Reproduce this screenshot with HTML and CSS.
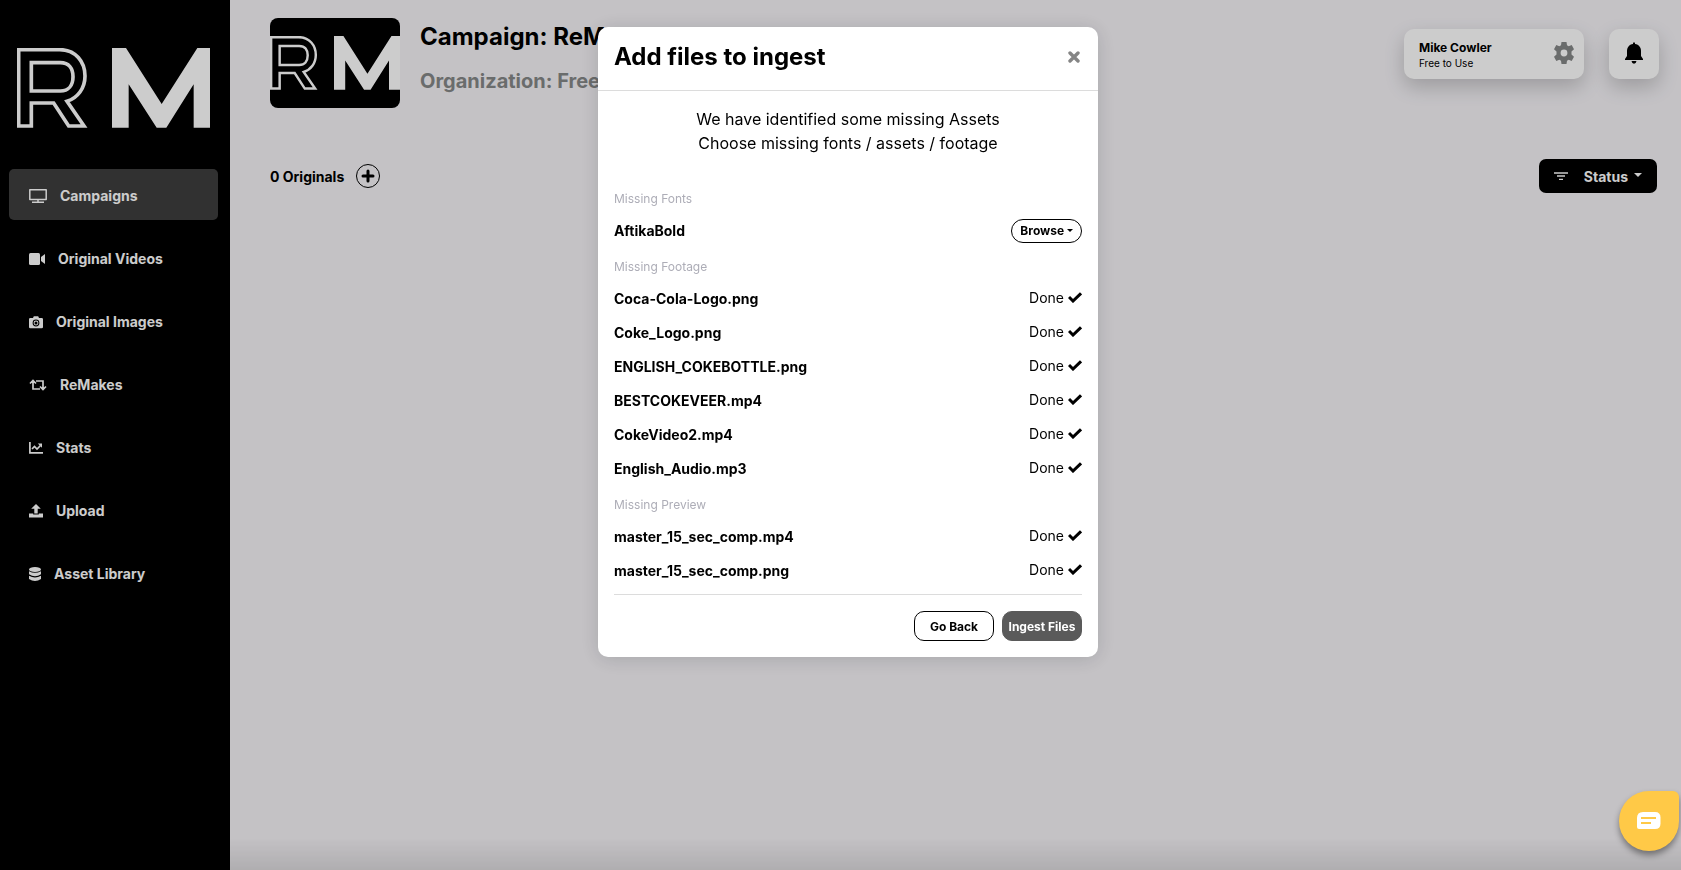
FILE: index.html
```html
<!DOCTYPE html>
<html lang="en">
<head>
  <meta charset="UTF-8">
  <title>ReMake - Campaign</title>
  <meta name="viewport" content="width=device-width, initial-scale=1.0">
  <link rel="stylesheet" href="styles.css">
</head>
<body>
  <!-- Shared icons -->
  <svg class="sprite" aria-hidden="true">
    <symbol id="logo" viewBox="0 0 579 240">
      <path fill="none" stroke="currentColor" stroke-width="11" d="M5 5H128C176 5 204 42 204 84C204 121 182 150 150 160L201 234H155L110 165H43V234H5ZM43 44H130C156 44 168 62 168 86C168 112 154 129 130 129H43Z"/>
      <path fill="currentColor" d="M285 0H327L434 168L541 0H579V239H530V109L448 239H419L335 109V239H285Z"/>
    </symbol>
    <symbol id="check" viewBox="0 0 14 11">
      <path fill="none" stroke="currentColor" stroke-width="3" d="M1 5L5 9L13 1.300"/>
    </symbol>
  </svg>

  <div class="layout">
    <!-- Sidebar -->
    <aside class="sidebar">
      <svg class="logo" role="img" aria-label="RM"><use href="#logo"/></svg>
      <nav class="menu">
        <a href="#" class="active">
          <svg width="18" height="16" viewBox="0 0 18 16"><path fill="none" stroke="currentColor" stroke-width="1.500" stroke-linejoin="round" d="M.800 1.800H17.200V11.500H.800ZM9 11.500V14M3 14.300H15"/></svg>
          Campaigns
        </a>
        <a href="#">
          <svg width="16" height="12" viewBox="0 0 16 12"><rect width="11" height="12" rx="1.500" fill="currentColor"/><path fill="currentColor" d="M12 4L16 1V11L12 8Z"/></svg>
          Original Videos
        </a>
        <a href="#">
          <svg width="14" height="14" viewBox="0 0 14 14"><path fill="currentColor" fill-rule="evenodd" d="M1.300 3H4L4.800 1.300H9.200L10 3H12.700Q14 3 14 4.300V12Q14 13.300 12.700 13.300H1.300Q0 13.300 0 12V4.300Q0 3 1.300 3ZM7 4.600A3.400 3.400 0 1 0 7 11.400A3.400 3.400 0 1 0 7 4.600Z"/><circle cx="7" cy="8" r="2.400" fill="currentColor"/><circle cx="7" cy="8" r="1.500" fill="#000"/></svg>
          Original Images
        </a>
        <a href="#">
          <svg width="18" height="12" viewBox="0 0 18 12"><path fill="none" stroke="currentColor" stroke-width="1.700" d="M4 2V10H11M1 4.500L4 1.500L7 4.500M7 2H14V10M11 7.500L14 10.500L17 7.500"/></svg>
          ReMakes
        </a>
        <a href="#">
          <svg width="14" height="12" viewBox="0 0 14 12"><path fill="none" stroke="currentColor" stroke-width="1.700" d="M.900 0V10.800H14M3 7L5.500 4.500L8 7L11.500 3.500"/><path fill="currentColor" d="M8.800 1.500H13V5.700Z"/></svg>
          Stats
        </a>
        <a href="#">
          <svg width="14" height="14" viewBox="0 0 14 14"><path fill="currentColor" d="M7 0L11.800 4.700H8.700V9.500H5.300V4.700H2.200ZM0 9.500H4.200V10.600H9.800V9.500H14V13.500H0Z"/></svg>
          Upload
        </a>
        <a href="#">
          <svg width="12" height="14" viewBox="0 0 12 14"><ellipse cx="6" cy="2.500" rx="6" ry="2.500" fill="currentColor"/><path fill="currentColor" d="M0 4.200Q6 7.500 12 4.200V7.300Q6 11 0 7.300ZM0 8.800Q6 12.200 12 8.800V12Q9 14 6 14T0 12Z"/></svg>
          Asset Library
        </a>
      </nav>
    </aside>

    <!-- Campaign page -->
    <main class="content">
      <header class="page-header">
        <div class="thumb"><svg aria-hidden="true"><use href="#logo"/></svg></div>
        <div class="heading">
          <h1>Campaign: ReM</h1>
          <h2>Organization: Free</h2>
        </div>
        <button class="user-card">
          <span><strong>Mike Cowler</strong><small>Free to Use</small></span>
          <svg width="20" height="22" viewBox="0 0 20 22"><path fill="currentColor" fill-rule="evenodd" d="M7.500 0H12.500L13 3.200L14.700 4.200L17.700 3L20 7.300L17.500 9.500V12.500L20 14.700L17.700 19L14.700 17.800L13 18.800L12.500 22H7.500L7 18.800L5.300 17.800L2.300 19L0 14.700L2.500 12.500V9.500L0 7.300L2.300 3L5.300 4.200L7 3.200ZM10 7.600A3.400 3.400 0 1 0 10 14.400A3.400 3.400 0 1 0 10 7.600Z"/></svg>
        </button>
        <button class="bell" aria-label="Notifications">
          <svg width="18" height="22" viewBox="0 0 18 22"><path fill="currentColor" d="M8 1Q9 -.500 10 1V2C14 2.500 16 5.500 16 9V14L18 17V18H0V17L2 14V9C2 5.500 4 2.500 8 2ZM6.500 19H11.500Q11 21.700 9 21.700T6.500 19Z"/></svg>
        </button>
      </header>

      <div class="toolbar">
        <span>0 Originals</span>
        <button class="add" aria-label="Add original">
          <svg width="14" height="14" viewBox="0 0 14 14"><path stroke="currentColor" stroke-width="3" stroke-linecap="round" d="M7 2V12M2 7H12"/></svg>
        </button>
        <button class="status">
          <svg width="14" height="8" viewBox="0 0 14 8"><path stroke="currentColor" stroke-width="1.300" d="M0 1H14M3 4H11M5 7.300H9"/></svg>
          Status
          <i class="caret"></i>
        </button>
      </div>
    </main>
  </div>

  <!-- Ingest dialog -->
  <div class="backdrop">
    <section class="modal" role="dialog" aria-modal="true" aria-labelledby="modalTitle">
      <header class="modal-header">
        <h2 id="modalTitle">Add files to ingest</h2>
        <button class="close" aria-label="Close">
          <svg width="12" height="12" viewBox="0 0 12 12"><path stroke="currentColor" stroke-width="3.400" stroke-linecap="round" d="M2 2L10 10M10 2L2 10"/></svg>
        </button>
      </header>
      <div class="modal-body">
        <p class="intro">We have identified some missing Assets<br>Choose missing fonts / assets / footage</p>

        <h3>Missing Fonts</h3>
        <ul>
          <li><b>AftikaBold</b><button class="browse">Browse <i class="caret"></i></button></li>
        </ul>

        <h3>Missing Footage</h3>
        <ul>
          <li><b>Coca-Cola-Logo.png</b><span class="done">Done <svg><use href="#check"/></svg></span></li>
          <li><b>Coke_Logo.png</b><span class="done">Done <svg><use href="#check"/></svg></span></li>
          <li><b>ENGLISH_COKEBOTTLE.png</b><span class="done">Done <svg><use href="#check"/></svg></span></li>
          <li><b>BESTCOKEVEER.mp4</b><span class="done">Done <svg><use href="#check"/></svg></span></li>
          <li><b>CokeVideo2.mp4</b><span class="done">Done <svg><use href="#check"/></svg></span></li>
          <li><b>English_Audio.mp3</b><span class="done">Done <svg><use href="#check"/></svg></span></li>
        </ul>

        <h3>Missing Preview</h3>
        <ul>
          <li><b>master_15_sec_comp.mp4</b><span class="done">Done <svg><use href="#check"/></svg></span></li>
          <li><b>master_15_sec_comp.png</b><span class="done">Done <svg><use href="#check"/></svg></span></li>
        </ul>

        <footer class="actions">
          <button class="back">Go Back</button>
          <button class="ingest">Ingest Files</button>
        </footer>
      </div>
    </section>
  </div>

  <!-- Chat launcher -->
  <button class="chat" aria-label="Open chat">
    <svg width="24" height="18" viewBox="0 0 24 18"><path fill="#fff" d="M6 0H18Q23.500 0 23.500 5.500V11.500Q23.500 17 18 17H2Q0 17 0 15V6Q0 0 6 0Z"/><path stroke="#ffc947" stroke-width="2" d="M4 6H19M4 11H14"/></svg>
  </button>
</body>
</html>
```
FILE: styles.css
```css
* {
  box-sizing: border-box;
}
body {
  margin: 0;
  font-family: Inter, sans-serif;
  font-size: 14px;
  color: #000;
  background-color: #f5f3f7;
}
h1, h2, h3, p, ul {
  margin: 0;
  padding: 0;
}
button {
  font: inherit;
  color: inherit;
  border: none;
  padding: 0;
  cursor: pointer;
}
svg {
  flex: none;
}
.sprite {
  position: absolute;
  width: 0;
  height: 0;
}
.layout {
  display: flex;
  min-height: 100vh;
}

/* Sidebar */
.sidebar {
  width: 230px;
  flex: none;
  padding: 48px 12px 0 9px;
  background-color: #000;
  color: #fff;
}
.logo {
  display: block;
  width: 193px;
  height: 80px;
  margin: 0 0 41px 8px;
}
.menu {
  display: flex;
  flex-direction: column;
  gap: 12px;
}
.menu a {
  display: flex;
  align-items: center;
  gap: 13px;
  height: 51px;
  padding: 2px 20px 0;
  border-radius: 5px;
  color: #fff;
  font-weight: 700;
  text-decoration: none;
}
.menu .active {
  background-color: #3e3e3e;
}

/* Page header */
.content {
  flex: 1;
  padding: 18px 22px 0 40px;
}
.page-header {
  display: flex;
  align-items: flex-start;
}
.thumb {
  display: flex;
  align-items: center;
  width: 130px;
  height: 90px;
  border-radius: 8px;
  background-color: #000;
  color: #fff;
  overflow: hidden;
}
.thumb svg {
  width: 130px;
  height: 54px;
}
.heading {
  flex: 1;
  margin-left: 20px;
}
.heading h1 {
  padding-top: 1px;
  font-size: 24px;
  line-height: 36px;
  font-weight: 700;
}
.heading h2 {
  margin-top: 11px;
  font-size: 20px;
  line-height: 30px;
  font-weight: 700;
  color: #858787;
}
.user-card, .bell {
  display: flex;
  align-items: center;
  height: 50px;
  margin-top: 11px;
  border-radius: 10px;
  background-color: #fff;
  box-shadow: 0 8px 20px rgba(0, 0, 0, 0.2);
}
.user-card {
  justify-content: space-between;
  width: 180px;
  padding: 0 10px 0 15px;
  text-align: left;
}
.user-card strong, .user-card small {
  display: block;
  font-size: 12px;
  line-height: 16px;
}
.user-card strong {
  padding-top: 1px;
}
.user-card small {
  font-size: 10px;
  line-height: 14px;
}
.user-card svg {
  color: #858787;
}
.bell {
  justify-content: center;
  width: 50px;
  margin-left: 25px;
}
.user-card svg, .bell svg {
  margin-bottom: 2px;
}

/* Toolbar */
.toolbar {
  display: flex;
  align-items: center;
  margin: 51px 2px 0 0;
  font-weight: 700;
}
.add {
  display: flex;
  align-items: center;
  justify-content: center;
  width: 24px;
  height: 24px;
  margin-left: 12px;
  border: 1px solid #000;
  border-radius: 50%;
  background: none;
}
.status {
  display: flex;
  align-items: center;
  height: 34px;
  margin-left: auto;
  padding: 0 15px;
  border-radius: 7px;
  background-color: #000;
  color: #fff;
}
.status svg {
  margin-right: 16px;
}
.caret {
  display: inline-block;
  margin-left: 6px;
  border: 4px solid transparent;
  border-top-color: currentColor;
  border-bottom: 0;
}
.status .caret {
  margin-bottom: 3px;
}

/* Dialog */
.backdrop {
  position: fixed;
  inset: 0;
  padding: 27px 0 27px 15px;
  background-color: rgba(0, 0, 0, 0.2);
  overflow: auto;
}
.modal {
  max-width: 500px;
  margin: 0 auto;
  border-radius: 10px;
  background-color: #fff;
  box-shadow: 0 2px 20px rgba(0, 0, 0, 0.15);
}
.modal-header {
  display: flex;
  align-items: center;
  justify-content: space-between;
  padding: 12px 18px 15px 16px;
  border-bottom: 1px solid #dcdcdc;
}
.modal-header h2 {
  font-size: 24px;
  line-height: 36px;
}
.close {
  display: flex;
  color: #858585;
  background: none;
}
.modal-body {
  padding: 16px;
}
.intro {
  margin-bottom: 25px;
  font-size: 16px;
  line-height: 24px;
  text-align: center;
}
.modal h3 {
  padding-top: 4px;
  font-size: 12px;
  line-height: 30px;
  font-weight: 400;
  color: #adadb7;
}
.modal ul {
  list-style: none;
}
.modal li {
  display: flex;
  align-items: center;
  justify-content: space-between;
  height: 34px;
  padding-bottom: 1px;
}
.done {
  display: flex;
  align-items: center;
  gap: 4px;
  padding-bottom: 2px;
}
.done svg {
  width: 14px;
  height: 11px;
}
.browse {
  height: 24px;
  padding: 0 8px;
  border: 1px solid #000;
  border-radius: 12px;
  background-color: #fff;
  font-size: 12px;
  font-weight: 700;
}
.browse .caret {
  margin-left: 0;
  border-width: 3px 3px 0;
  vertical-align: 3px;
}
.actions {
  display: flex;
  justify-content: flex-end;
  gap: 8px;
  margin-top: 6px;
  padding-top: 16px;
  border-top: 1px solid #dcdcdc;
}
.actions button {
  width: 80px;
  height: 30px;
  border: 1px solid #000;
  border-radius: 10px;
  background-color: #fff;
  font-size: 12px;
  font-weight: 700;
}
.actions .ingest {
  border-color: #5a5a5a;
  background-color: #5a5a5a;
  color: #fff;
}

/* Shade along the bottom edge of the window */
.backdrop::after {
  content: "";
  position: fixed;
  right: 0;
  bottom: 0;
  left: 0;
  height: 32px;
  background: linear-gradient(transparent, rgba(0, 0, 0, 0.1));
  pointer-events: none;
}

/* Chat launcher */
.chat {
  position: fixed;
  right: 2px;
  bottom: 19px;
  display: flex;
  align-items: center;
  justify-content: center;
  width: 60px;
  height: 60px;
  border-radius: 30px 6px 30px 30px;
  background-color: #ffc947;
  box-shadow: 0 4px 6px rgba(0, 0, 0, 0.4);
}
```
